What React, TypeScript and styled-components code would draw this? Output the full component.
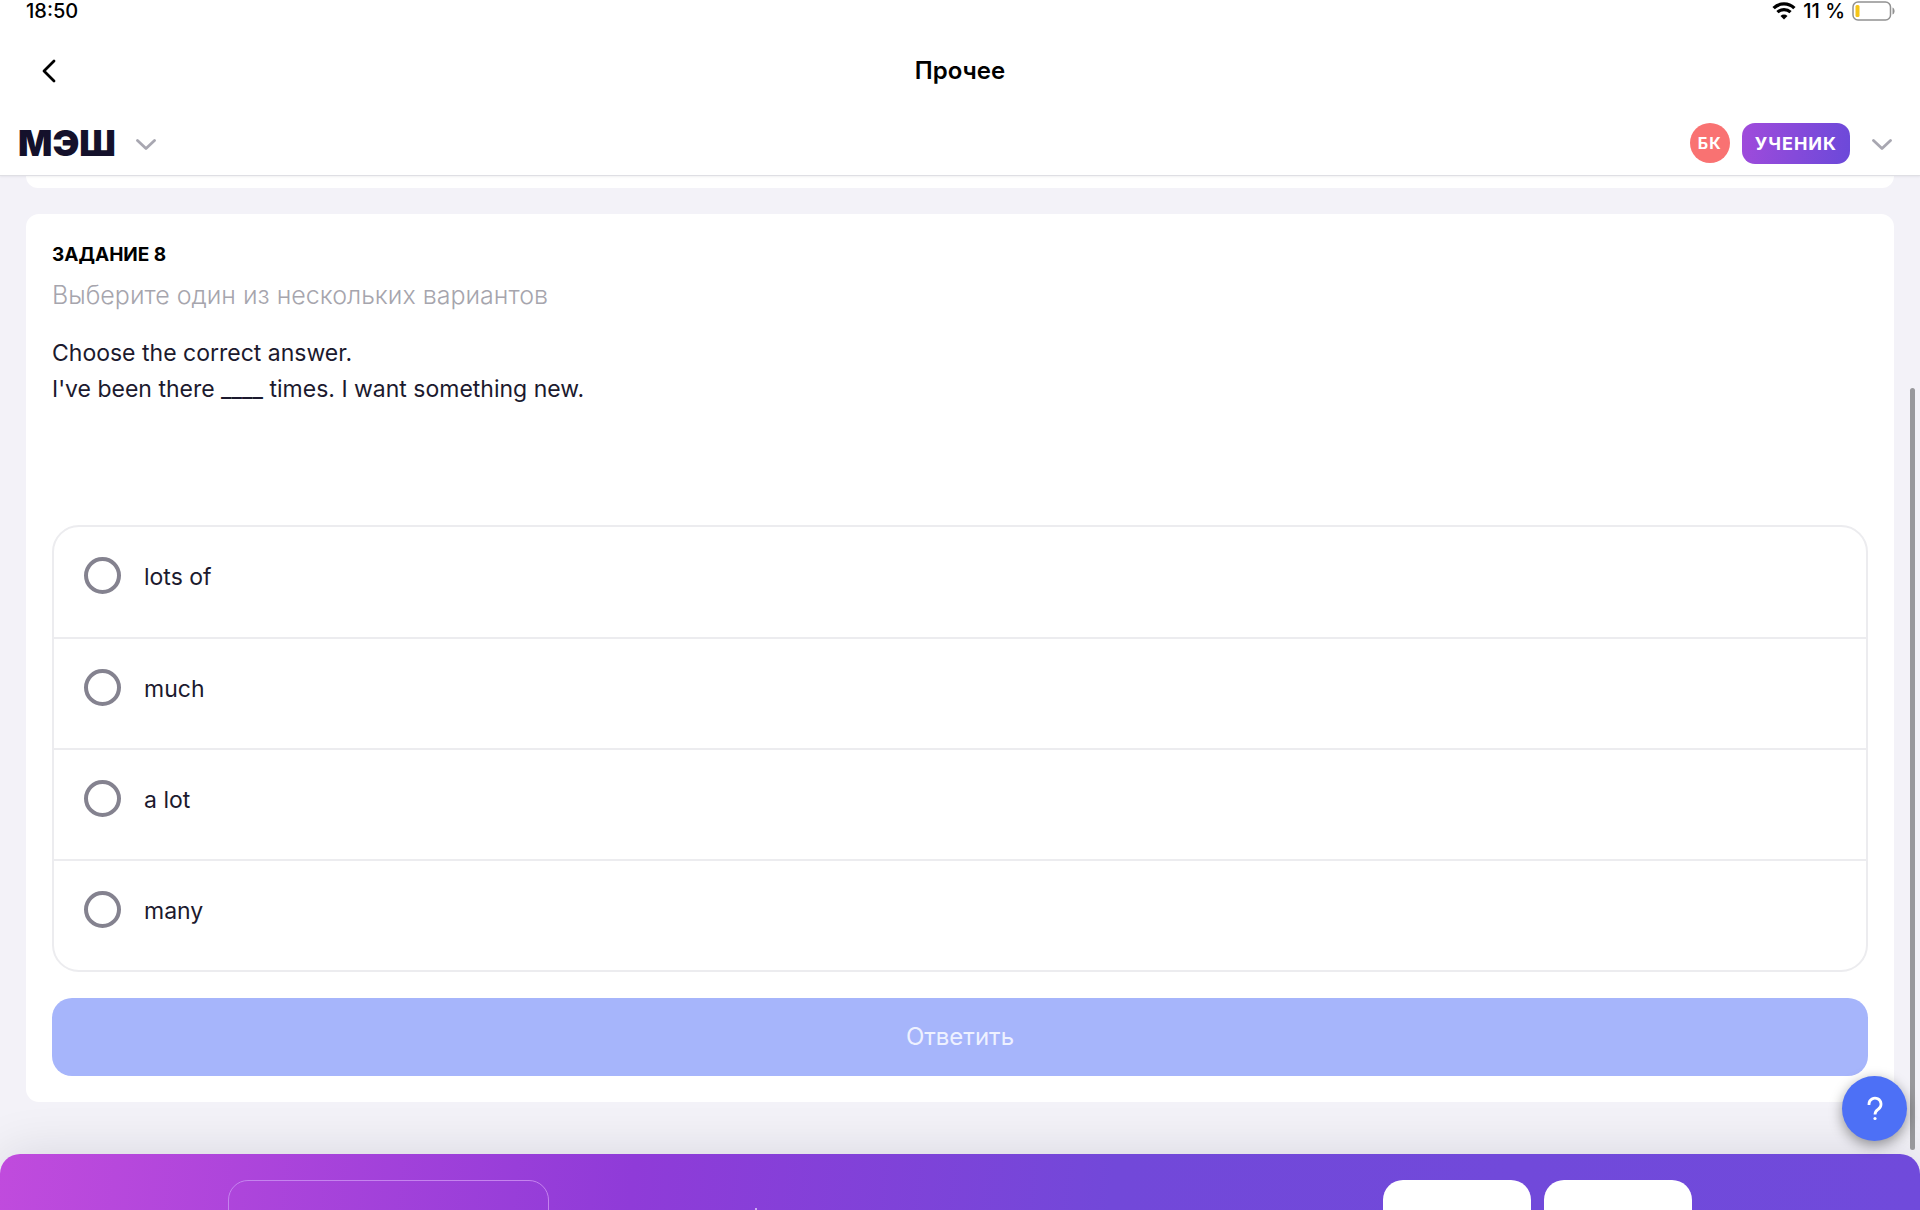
import React, { useState } from "react";
import styled, { createGlobalStyle } from "styled-components";

const GlobalStyle = createGlobalStyle`
  *, *::before, *::after { box-sizing: border-box; }
  body {
    margin: 0;
    background: #f3f2f8;
    color: #1c1a2e;
    font-family: Inter, "Liberation Sans", sans-serif;
    font-size: 23px;
  }
  button { font: inherit; border: 0; padding: 0; background: none; cursor: pointer; }
`;

const Page = styled.div`
  position: relative;
  display: flex;
  flex-direction: column;
  height: 100vh;
  overflow: hidden;
`;

const TopArea = styled.header`
  flex: none;
  background: #fff;
  border-bottom: 1px solid #dfdfe4;
  box-shadow: 0 1px 2px rgba(20, 20, 40, 0.06);
  z-index: 1;
`;

const StatusBar = styled.div`
  display: flex;
  align-items: center;
  justify-content: space-between;
  height: 22px;
  padding: 0 25px 0 26px;
  color: #000;
  font-size: 20px;
  line-height: 22px;
  font-weight: 500;
`;

const StatusGroup = styled.div`
  display: flex;
  align-items: center;
  gap: 7px;
`;

const NavBar = styled.nav`
  display: grid;
  grid-template-columns: 1fr auto 1fr;
  align-items: center;
  height: 98px;
  padding: 0 33px;
`;

const IconButton = styled.button`
  display: flex;
  align-items: center;
  justify-content: center;
  justify-self: start;
  width: 32px;
  height: 40px;
`;

const NavTitle = styled.h1`
  margin: 0;
  color: #000;
  font-size: 24px;
  line-height: 32px;
  font-weight: 600;
`;

const BrandBar = styled.div`
  display: flex;
  align-items: center;
  justify-content: space-between;
  height: 46px;
  margin-bottom: 9px;
  padding: 0 28px 0 18px;
`;

const BrandGroup = styled.div<{ $gap: number }>`
  display: flex;
  align-items: center;
  gap: ${(p) => p.$gap}px;
`;

const Logo = styled.a`
  color: #14112b;
  font-size: 36px;
  line-height: 40px;
  font-weight: 900;
  text-decoration: none;
`;

const MenuButton = styled(IconButton)`
  width: 20px;
  height: 20px;
  padding-top: 4px;
`;

const Avatar = styled.span`
  display: flex;
  align-items: center;
  justify-content: center;
  width: 40px;
  height: 40px;
  margin-right: 12px;
  border-radius: 50%;
  background: #f97272;
  color: #fff;
  font-size: 16px;
  font-weight: 700;
  letter-spacing: 1px;
`;

const RoleBadge = styled.span`
  margin-right: 22px;
  padding: 0 13px;
  border-radius: 13px;
  background: linear-gradient(100deg, #a04bdb, #6b49d9);
  color: #fff;
  font-size: 18px;
  line-height: 41px;
  font-weight: 700;
  letter-spacing: 1px;
`;

const Content = styled.main`
  flex: 1;
  min-height: 0;
  display: flex;
  flex-direction: column;
  gap: 26px;
  padding: 0 26px;
`;

const PreviousCard = styled.div`
  flex: none;
  height: 12px;
  border-radius: 0 0 13px 13px;
  background: #fff;
`;

const Card = styled.section`
  flex: none;
  padding: 26px;
  border-radius: 13px;
  background: #fff;
`;

const TaskNumber = styled.h2`
  margin: 0;
  color: #000;
  font-size: 19px;
  line-height: 30px;
  font-weight: 700;
`;

const TaskHint = styled.p`
  margin: 7px 0 0;
  color: #a6a5ad;
  font-size: 25px;
  line-height: 36px;
  font-weight: 300;
`;

const Question = styled.p`
  margin: 22px 0 118px;
  line-height: 36px;
`;

const Options = styled.fieldset`
  margin: 0;
  padding: 0;
  border: 2px solid #ececef;
  border-radius: 27px;
`;

const Option = styled.label`
  display: flex;
  align-items: flex-start;
  gap: 23px;
  height: 110px;
  padding: 30px;
  line-height: 40px;
  cursor: pointer;

  & + & {
    height: 111px;
    border-top: 2px solid #ececef;
  }
`;

const Radio = styled.input`
  appearance: none;
  width: 37px;
  height: 37px;
  margin: 0;
  border: 4px solid #84828f;
  border-radius: 50%;
  background: #fff;

  &:checked { border: 11px solid #4d70f6; }
`;

const SubmitButton = styled.button`
  display: block;
  width: 100%;
  margin-top: 26px;
  border-radius: 20px;
  background: #a6b5fb;
  color: #eef1ff;
  font-size: 24px;
  line-height: 78px;
`;

const Footer = styled.footer`
  flex: none;
  display: flex;
  align-items: flex-start;
  height: 56px;
  padding: 26px 228px 0;
  overflow: hidden;
  border-radius: 20px 20px 0 0;
  background: linear-gradient(96deg, #c04bdd 0%, #8f3bd8 33%, #7248d9 58%, #704adb 100%);
`;

const FooterShade = styled.div`
  flex: none;
  border-radius: 20px 20px 0 0;
  box-shadow: 0 0 52px rgba(20, 15, 35, 0.12);
`;

const FooterOutline = styled.div`
  width: 321px;
  height: 80px;
  border: 1px solid #c583ee;
  border-radius: 20px;
`;

const FooterMark = styled.span`
  width: 2px;
  height: 2px;
  margin: 28px auto 0 206px;
  background: #cfaef2;
`;

const FooterButton = styled.button`
  width: 148px;
  height: 80px;
  margin-left: 13px;
  border-radius: 20px;
  background: #fff;
`;

const ScrollThumb = styled.div`
  position: absolute;
  right: 5px;
  bottom: 60px;
  width: 5px;
  height: 63%;
  border-radius: 3px;
  background: #98989c;
  z-index: 2;
`;

const HelpButton = styled.button`
  position: absolute;
  right: 13px;
  bottom: 69px;
  display: flex;
  align-items: center;
  justify-content: center;
  width: 65px;
  height: 65px;
  border-radius: 50%;
  background: #4d70f6;
  box-shadow: 0 4px 13px rgba(0, 0, 0, 0.4);
  z-index: 3;
`;

const Chevron = () => (
  <svg width="20" height="12" viewBox="0 0 20 12" fill="none" stroke="#a8a7b1" strokeWidth="2.8" strokeLinecap="round" strokeLinejoin="round">
    <path d="M1.5 1.5 10 9.5l8.5-8" />
  </svg>
);

const Wifi = () => (
  <svg width="24" height="18" viewBox="0 0 22 17" fill="none" stroke="#000">
    <path d="M1.2 5.8a14 14 0 0 1 19.6 0" strokeWidth="3.2" />
    <path d="M4.8 9.6a9 9 0 0 1 12.4 0" strokeWidth="3" />
    <path d="M11 16.500 7.700 13.200a4.700 4.700 0 0 1 6.600 0z" fill="#000" stroke="none" />
  </svg>
);

const Battery = () => (
  <svg width="43" height="20" viewBox="0 0 43 20">
    <rect x="1" y="1" width="37.5" height="18" rx="5" fill="#fff" stroke="#919191" strokeWidth="1.5" />
    <rect x="3.5" y="4" width="4" height="12" rx="1.5" fill="#f5c518" />
    <path d="M40.5 6.500c2.800 1 2.800 6 0 7z" fill="#919191" />
  </svg>
);

const answers = ["lots of", "much", "a lot", "many"];

export default function App() {
  const [selected, setSelected] = useState("");

  return (
    <Page>
      <GlobalStyle />
      <TopArea>
        <StatusBar>
          <span>18:50</span>
          <StatusGroup>
            <Wifi />
            <span>11 %</span>
            <Battery />
          </StatusGroup>
        </StatusBar>
        <NavBar>
          <IconButton aria-label="Назад">
            <svg width="14" height="24" viewBox="0 0 14 24" fill="none" stroke="#000" strokeWidth="2.8" strokeLinecap="round" strokeLinejoin="round">
              <path d="M12 2 2 12 12 22" />
            </svg>
          </IconButton>
          <NavTitle>Прочее</NavTitle>
        </NavBar>
        <BrandBar>
          <BrandGroup $gap={20}>
            <Logo href="#">МЭШ</Logo>
            <MenuButton aria-label="Меню">
              <Chevron />
            </MenuButton>
          </BrandGroup>
          <BrandGroup $gap={0}>
            <Avatar>БК</Avatar>
            <RoleBadge>УЧЕНИК</RoleBadge>
            <MenuButton aria-label="Профиль">
              <Chevron />
            </MenuButton>
          </BrandGroup>
        </BrandBar>
      </TopArea>

      <Content>
        <PreviousCard />
        <Card>
          <TaskNumber>ЗАДАНИЕ 8</TaskNumber>
          <TaskHint>Выберите один из нескольких вариантов</TaskHint>
          <Question>
            Choose the correct answer.
            <br />
            I've been there ____ times. I want something new.
          </Question>
          <Options aria-label="Варианты">
            {answers.map((answer) => (
              <Option key={answer}>
                <Radio
                  type="radio"
                  name="answer"
                  value={answer}
                  checked={selected === answer}
                  onChange={() => setSelected(answer)}
                />
                {answer}
              </Option>
            ))}
          </Options>
          <SubmitButton>Ответить</SubmitButton>
        </Card>
      </Content>

      <FooterShade>
        <Footer>
          <FooterOutline />
          <FooterMark />
          <FooterButton aria-label="Предыдущее" />
          <FooterButton aria-label="Следующее" />
        </Footer>
      </FooterShade>

      <ScrollThumb />
      <HelpButton aria-label="Помощь">
        <svg width="18" height="26" viewBox="0 0 18 26" fill="none" stroke="#fff" strokeWidth="2.8">
          <path d="M3 9V8a6 6 0 1 1 9.500 5C10.500 14.500 9 15.300 9 18.500" />
          <circle cx="9" cy="22.5" r="1.6" fill="#fff" stroke="none" />
        </svg>
      </HelpButton>
    </Page>
  );
}
